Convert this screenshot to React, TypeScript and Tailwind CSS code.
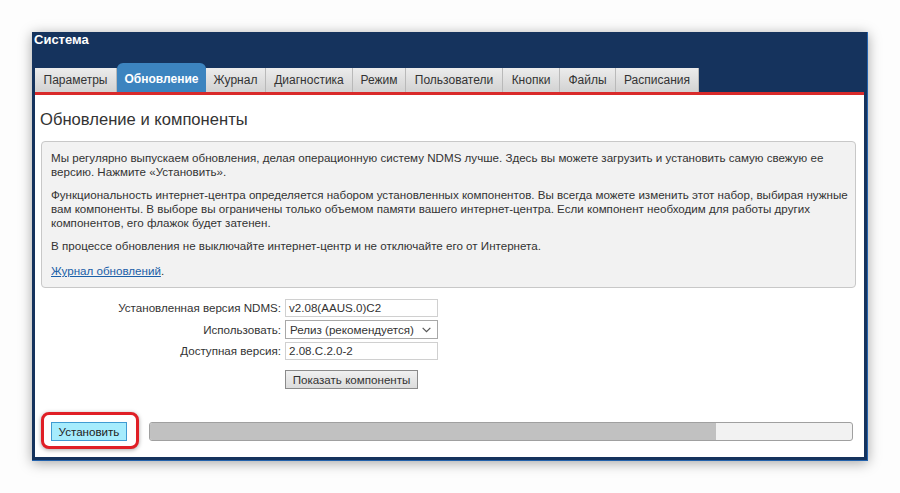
import React from 'react'

const tabs: { label: string; width: string; active?: boolean }[] = [
  { label: 'Параметры', width: 'w-[82px]' },
  { label: 'Обновление', width: 'w-[89px]', active: true },
  { label: 'Журнал', width: 'w-[60px]' },
  { label: 'Диагностика', width: 'w-[87px]' },
  { label: 'Режим', width: 'w-[53px]' },
  { label: 'Пользователи', width: 'w-[97px]' },
  { label: 'Кнопки', width: 'w-[57px]' },
  { label: 'Файлы', width: 'w-[56px]' },
  { label: 'Расписания', width: 'w-[83px]' },
]

const Chevron = () => (
  <svg className="w-[11px] h-[11px]" viewBox="0 0 10 10" fill="none" stroke="#555" strokeWidth={1.1}>
    <path d="M1.5 3.5 5 7l3.5-3.5" />
  </svg>
)

export default function App() {
  return (
    <div className="w-[900px] h-[493px] bg-[#fdfdfd] pt-[32px] pl-[32px] font-['Liberation_Sans',Arial,sans-serif] text-[#333]">
      <div className="w-[836px] bg-[#15335d] px-[3px] pb-[3px] border-r border-b border-[#2463ad] shadow-[0_2px_12px_rgba(0,0,0,0.35)]">
        {/* Header */}
        <div className="h-[31px] pt-[1px] -ml-[1px] text-white font-bold text-[13px] leading-[14px]">
          Система
        </div>

        {/* Tabs */}
        <div className="flex items-end h-[29px]">
          {tabs.map((tab) =>
            tab.active ? (
              <div
                key={tab.label}
                className={`${tab.width} h-[29px] flex items-center justify-center rounded-t-[6px] bg-[#3c84bf] text-white font-bold text-[12px] pt-[2px]`}
              >
                {tab.label}
              </div>
            ) : (
              <div
                key={tab.label}
                className={`${tab.width} h-[24px] flex items-center justify-center bg-gradient-to-b from-[#ececec] to-[#d2d2d2] border-r border-[#b9b9b9] text-[12px] text-[#333]`}
              >
                {tab.label}
              </div>
            )
          )}
        </div>
        <div className="h-[3px] bg-[#d92a2a]" />

        {/* Content */}
        <div className="bg-white h-[362px] pl-[6px] pr-[8px] pt-[15px]">
          <h2 className="text-[16.6px] leading-[20px] -ml-[1px] text-[#333]">Обновление и компоненты</h2>

          <div className="mt-[11px] h-[147px] bg-[#f2f2f2] border border-[#c8c8c8] rounded-[4px] pl-[9px] pr-[2px] pt-[9px] text-[11.6px] leading-[14px] whitespace-nowrap">
            <p>
              Мы регулярно выпускаем обновления, делая операционную систему NDMS лучше. Здесь вы можете загрузить и установить самую свежую ее
              <br />
              версию. Нажмите «Установить».
            </p>
            <p className="mt-[9px]">
              Функциональность интернет-центра определяется набором установленных компонентов. Вы всегда можете изменить этот набор, выбирая нужные
              <br />
              вам компоненты. В выборе вы ограничены только объемом памяти вашего интернет-центра. Если компонент необходим для работы других
              <br />
              компонентов, его флажок будет затенен.
            </p>
            <p className="mt-[9px]">В процессе обновления не выключайте интернет-центр и не отключайте его от Интернета.</p>
            <p className="mt-[11px]">
              <span className="text-[#1b5fa8] underline">Журнал обновлений</span>.
            </p>
          </div>

          {/* Form */}
          <div className="mt-[11px] grid grid-cols-[240px_153px] gap-x-[4px] gap-y-[3px] items-center text-[11.6px]">
            <div className="text-right">Установленная версия NDMS:</div>
            <div className="h-[18px] border border-[#d0d0d0] px-[3px] leading-[16px]">v2.08(AAUS.0)C2</div>
            <div className="text-right">Использовать:</div>
            <div className="h-[19px] border border-[#a8a8a8] pl-[4px] pr-[5px] flex items-center justify-between">
              <span>Релиз (рекомендуется)</span>
              <Chevron />
            </div>
            <div className="text-right">Доступная версия:</div>
            <div className="h-[18px] border border-[#d0d0d0] px-[3px] leading-[16px]">2.08.C.2.0-2</div>
          </div>
          <div className="mt-[10px] ml-[244px] flex">
            <button
              type="button"
              className="w-[133px] h-[19px] border border-[#8a8a8a] bg-gradient-to-b from-[#f0f0f0] to-[#dcdcdc] text-[11.6px] text-[#333] leading-[17px]"
            >
              Показать компоненты
            </button>
          </div>

          {/* Install row */}
          <div className="mt-[23px] flex items-start">
            <div className="w-[98px] h-[37px] border-[3px] border-[#e01f26] rounded-[8px] bg-white shadow-[0_1px_4px_rgba(0,0,0,0.35)] pl-[7px] pt-[7px]">
              <button
                type="button"
                className="w-[76px] h-[19px] bg-[#a6ecfd] border border-[#3f9bd2] text-[11.6px] leading-[17px] text-[#222] flex items-center justify-center"
              >
                Установить
              </button>
            </div>
            <div className="ml-[10px] mt-[10px] w-[704px] h-[19px] border border-[#a0a0a0] rounded-[3px] bg-[#f2f2f2] overflow-hidden">
              <div className="h-full w-[566px] bg-[#c1c1c1]" />
            </div>
          </div>
        </div>
      </div>
    </div>
  )
}
